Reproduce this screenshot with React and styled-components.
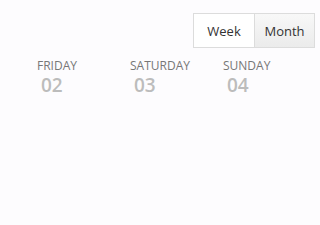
import React, { useState } from "react"
import styled, { createGlobalStyle } from "styled-components"

const GlobalStyle = createGlobalStyle`
  html, body {
    margin: 0;
    padding: 0;
    background: #fdfcfe;
    font-family: "Open Sans", "Liberation Sans", sans-serif;
  }
`

const Page = styled.div`
  width: 320px;
  height: 225px;
  box-sizing: border-box;
  padding: 13px 5px 0 37px;
`

const Toolbar = styled.div`
  display: flex;
  justify-content: flex-end;
`

const ToggleGroup = styled.div`
  display: flex;
  border: 1px solid #dcdcdc;
`

const ToggleButton = styled.button`
  width: 60px;
  height: 33px;
  border: none;
  border-left: ${(p) => (p.$first ? "none" : "1px solid #dcdcdc")};
  background: ${(p) => (p.$active ? "#ffffff" : "linear-gradient(#f8f8f8, #ebebeb)")};
  color: #333;
  font-family: inherit;
  font-size: 13px;
  padding: 0;
  cursor: pointer;
`

const Days = styled.div`
  display: grid;
  grid-template-columns: repeat(3, 93px);
  margin-top: 10px;
`

const Day = styled.div`
  display: flex;
  flex-direction: column;
`

const DayName = styled.span`
  font-size: 12px;
  line-height: 16px;
  color: #777;
  text-transform: uppercase;
`

const DayNumber = styled.span`
  font-size: 19px;
  line-height: 22px;
  font-weight: 600;
  color: #bcbcbc;
  padding-left: 4px;
`

const days = [
  { name: "Friday", num: "02" },
  { name: "Saturday", num: "03" },
  { name: "Sunday", num: "04" },
]

const App = () => {
  const [view, setView] = useState("week")
  return (
    <Page>
      <GlobalStyle />
      <Toolbar>
        <ToggleGroup>
          <ToggleButton $first $active={view === "week"} onClick={() => setView("week")}>Week</ToggleButton>
          <ToggleButton $active={view === "month"} onClick={() => setView("month")}>Month</ToggleButton>
        </ToggleGroup>
      </Toolbar>
      <Days>
        {days.map((d) => (
          <Day key={d.name}>
            <DayName>{d.name}</DayName>
            <DayNumber>{d.num}</DayNumber>
          </Day>
        ))}
      </Days>
    </Page>
  )
}

export default App
